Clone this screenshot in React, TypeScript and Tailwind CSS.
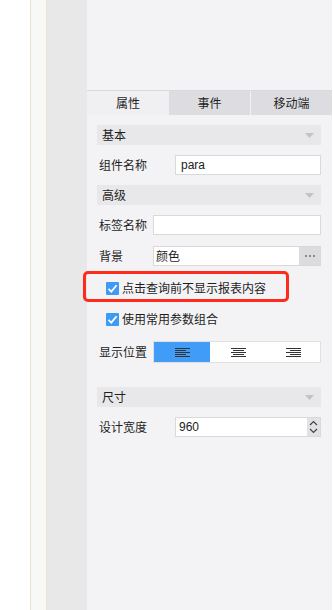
function Arrow() {
  return (
    <svg width="9" height="5" viewBox="0 0 9 5" className="shrink-0">
      <path d="M0 0 L9 0 L4.5 5 Z" fill="#c3c3c6" />
    </svg>
  );
}

function SectionHeader({ title }: { title: string }) {
  return (
    <div className="flex h-[20px] items-center justify-between bg-[#e8e8ea] pl-[5px] pr-[7px]">
      <span className="leading-none">{title}</span>
      <Arrow />
    </div>
  );
}

function Check() {
  return (
    <span className="flex h-[13px] w-[13px] shrink-0 items-center justify-center rounded-[1px] bg-[#3e9bf5]">
      <svg width="11" height="11" viewBox="0 0 11 11">
        <path d="M1.5 5.8 L4.3 8.6 L9.6 2.2" fill="none" stroke="#fff" strokeWidth="1.8" />
      </svg>
    </span>
  );
}

function AlignIcon({ kind }: { kind: "left" | "center" | "right" }) {
  const widths = [15, 11, 15, 11, 15];
  return (
    <svg width="15" height="9" viewBox="0 0 15 9">
      {widths.map((w, i) => {
        const x = kind === "left" ? 0 : kind === "right" ? 15 - w : (15 - w) / 2;
        return <rect key={i} x={x} y={i * 2} width={w} height="1" fill="#333" />;
      })}
    </svg>
  );
}

export default function App() {
  return (
    <div className="flex h-[610px] w-[333px] bg-white font-['Noto_Sans_CJK_SC',sans-serif] text-[12px] text-[#1e1e1e]">
      <div className="w-[30px] bg-white" />
      <div className="w-[17px] border-x border-[#ebe2d2] bg-[#f8f8f6]" />
      <div className="w-[40px] bg-[#e8e8e8]" />
      <div className="flex flex-1 flex-col border-r border-white bg-[#f3f3f5]">
        <div className="h-[90px]" />

        {/* Tabs */}
        <div className="flex h-[25px] border-t border-[#d9d9dd]">
          <div className="flex w-[82px] items-center justify-center bg-[#f0f0f2]">属性</div>
          <div className="flex w-[81px] items-center justify-center bg-[#dddde1]">事件</div>
          <div className="w-px bg-[#f3f3f5]" />
          <div className="flex flex-1 items-center justify-center bg-[#dddde1]">移动端</div>
        </div>

        <div className="flex flex-col pl-[10px] pr-[11px] pt-[10px]">
          <SectionHeader title="基本" />

          <div className="mt-[10px] flex h-[20px] items-center">
            <span className="w-[78px] pl-[2px]">组件名称</span>
            <div className="flex h-[20px] flex-1 items-center border border-[#d9d9d9] bg-white pl-[5px] font-['Liberation_Sans',sans-serif] text-[12px] text-[#222]">
              para
            </div>
          </div>

          <div className="mt-[10px]">
            <SectionHeader title="高级" />
          </div>

          <div className="mt-[10px] flex h-[20px] items-center">
            <span className="w-[56px] pl-[2px]">标签名称</span>
            <div className="h-[20px] flex-1 border border-[#d9d9d9] bg-white" />
          </div>

          <div className="mt-[11px] flex h-[20px] items-center">
            <span className="w-[56px] pl-[2px]">背景</span>
            <div className="flex h-[20px] flex-1 border border-[#d9d9d9] bg-white">
              <span className="flex flex-1 items-center pl-[2px]">颜色</span>
              <span className="flex w-[21px] items-center justify-center gap-[2px] bg-[#dcdcde]">
                <i className="h-[2px] w-[2px] bg-[#8a8a8a]" />
                <i className="h-[2px] w-[2px] bg-[#8a8a8a]" />
                <i className="h-[2px] w-[2px] bg-[#8a8a8a]" />
              </span>
            </div>
          </div>

          <div className="relative mt-[15px] flex h-[14px] items-center pl-[9px]">
            <Check />
            <span className="ml-[3px]">点击查询前不显示报表内容</span>
            <div className="pointer-events-none absolute left-[-14px] top-[-10px] h-[31px] w-[206px] rounded-[5px] border-[3px] border-[#fe2a1c]" />
          </div>

          <div className="mt-[17px] flex h-[14px] items-center pl-[9px]">
            <Check />
            <span className="ml-[3px]">使用常用参数组合</span>
          </div>

          <div className="mt-[15px] flex h-[22px] items-center">
            <span className="w-[56px] pl-[2px]">显示位置</span>
            <div className="flex h-[22px] flex-1 border border-[#e0e0e2] bg-white">
              <div className="flex w-[56px] items-center justify-center bg-[#419cf8]">
                <AlignIcon kind="left" />
              </div>
              <div className="flex w-[56px] items-center justify-center">
                <AlignIcon kind="center" />
              </div>
              <div className="flex flex-1 items-center justify-center">
                <AlignIcon kind="right" />
              </div>
            </div>
          </div>

          <div className="mt-[24px]">
            <SectionHeader title="尺寸" />
          </div>

          <div className="mt-[10px] flex h-[20px] items-center">
            <span className="w-[78px] pl-[2px]">设计宽度</span>
            <div className="flex h-[20px] flex-1 border border-[#d9d9d9] bg-white">
              <span className="flex flex-1 items-center pl-[3px] font-['Liberation_Sans',sans-serif] text-[12px] text-[#222]">
                960
              </span>
              <span className="flex w-[13px] flex-col items-center justify-center bg-[#e2e2e4]">
                <svg width="9" height="16" viewBox="0 0 9 16">
                  <path d="M1 6 L4.5 2.5 L8 6" fill="none" stroke="#444" strokeWidth="1.2" />
                  <path d="M1 10 L4.5 13.5 L8 10" fill="none" stroke="#444" strokeWidth="1.2" />
                </svg>
              </span>
            </div>
          </div>
        </div>
      </div>
    </div>
  );
}
